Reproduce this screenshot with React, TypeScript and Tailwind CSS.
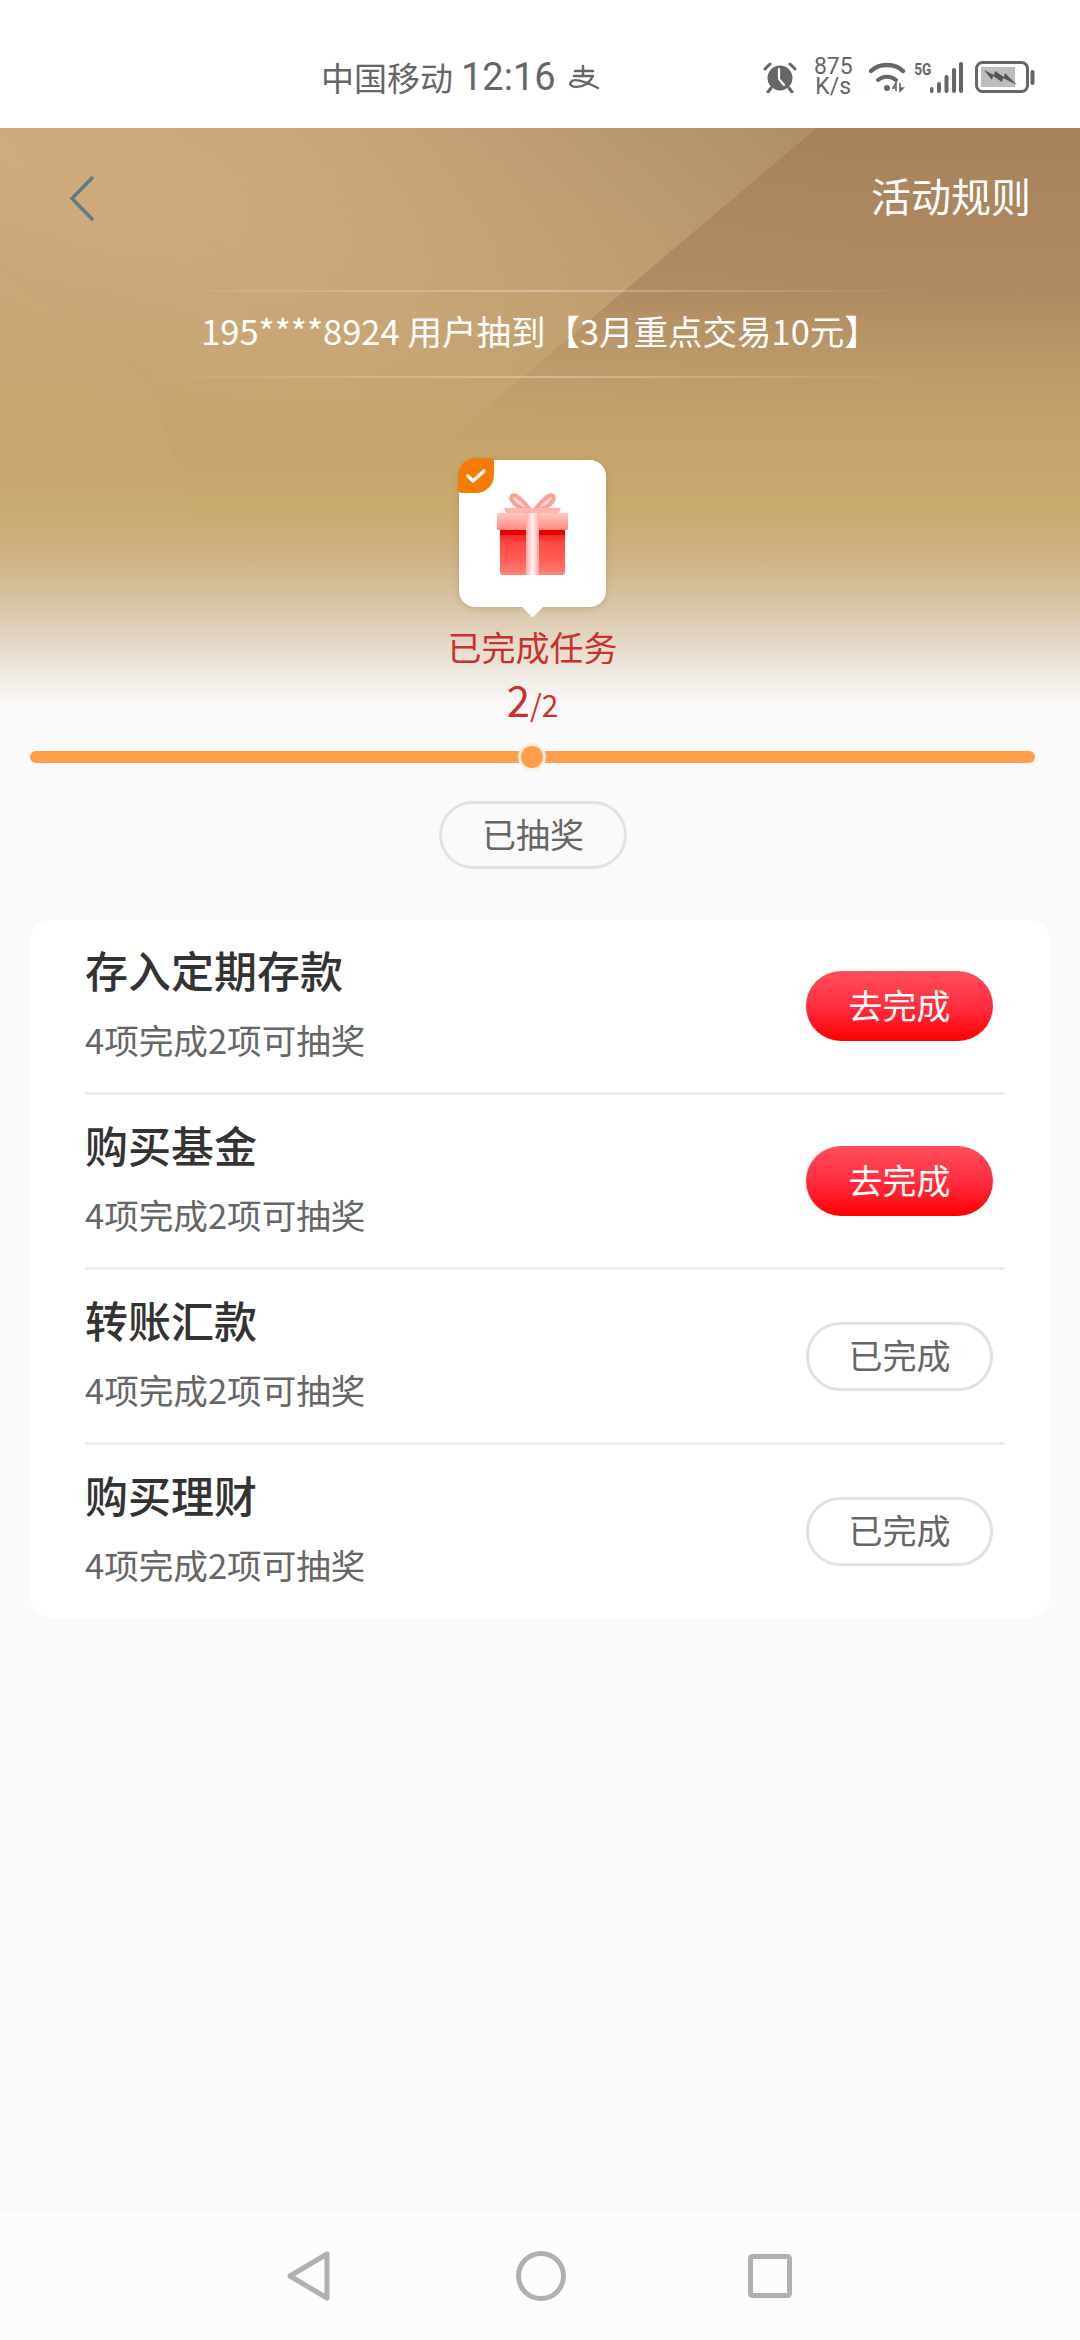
const cjk = { fontFamily: '"Noto Sans CJK SC", "Noto Sans", sans-serif' };

const tasks = [
  { name: "存入定期存款", done: false },
  { name: "购买基金", done: false },
  { name: "转账汇款", done: true },
  { name: "购买理财", done: true },
];

function AlipayIcon() {
  return (
    <svg width="33" height="26" viewBox="0 0 33 26" fill="none">
      <path d="M7 7H25M15 2V12M6 12H25C22 18 16 23 8 23 3 23 1 20 3 18 6 14 16 17 30 24" stroke="#666" strokeWidth="2.4" strokeLinecap="round" strokeLinejoin="round" />
    </svg>
  );
}

function AlarmIcon() {
  return (
    <svg width="34" height="32" viewBox="0 0 34 32" fill="none">
      <circle cx="17" cy="17" r="12.5" fill="#666" />
      <path d="M16 8v10l5 6" stroke="#fff" strokeWidth="2.2" strokeLinecap="round" strokeLinejoin="round" />
      <path d="M2 8 7 3M32 8 27 3" stroke="#666" strokeWidth="3" strokeLinecap="round" />
      <path d="M8 27 5 31M26 27l3 4" stroke="#666" strokeWidth="3" strokeLinecap="round" />
    </svg>
  );
}

function WifiIcon() {
  return (
    <svg width="38" height="32" viewBox="0 0 38 32" fill="none">
      <path d="M2 10C10 2 26 2 34 10" stroke="#666" strokeWidth="4.5" strokeLinecap="round" />
      <path d="M9 19c5-4.500 13-4.500 18 0" stroke="#666" strokeWidth="4" strokeLinecap="round" />
      <circle cx="18" cy="27" r="3" fill="#666" />
      <path d="M27 30v-8l-3 5h3M31 22v8l3-3h-3" stroke="#666" strokeWidth="1.6" />
    </svg>
  );
}

function SignalIcon() {
  return (
    <svg width="33" height="31" viewBox="0 0 33 31" fill="#666">
      <rect x="0" y="25" width="3.500" height="6" rx="1.700" />
      <rect x="7" y="20" width="4" height="11" rx="2" />
      <rect x="14.500" y="13" width="4" height="18" rx="2" />
      <rect x="22" y="6" width="4" height="25" rx="2" />
      <rect x="29" y="0" width="4" height="31" rx="2" />
    </svg>
  );
}

function BatteryIcon() {
  return (
    <svg width="60" height="32" viewBox="0 0 60 32" fill="none">
      <rect x="1.500" y="1.500" width="51" height="29" rx="6" stroke="#666" strokeWidth="3" />
      <rect x="6" y="6" width="34" height="20" fill="#bdbdbd" />
      <rect x="55.500" y="9" width="4" height="15" rx="2" fill="#666" />
      <path d="M9 9l10 5 1-4 9 6 1-4 12 12-14-7-1 4-9-6-1 4Z" fill="#555" />
    </svg>
  );
}

function GiftIcon() {
  return (
    <svg width="71" height="82" viewBox="0 0 71 82" fill="none">
      <defs>
        <linearGradient id="giftLid" x1="0" y1="0" x2="0" y2="1">
          <stop offset="0" stopColor="#ffc8c0" />
          <stop offset="1" stopColor="#ff8a82" />
        </linearGradient>
        <linearGradient id="giftBody" x1="0" y1="0" x2="0" y2="1">
          <stop offset="0" stopColor="#f01010" />
          <stop offset="0.3" stopColor="#ff4a44" />
          <stop offset="0.7" stopColor="#ff6058" />
          <stop offset="1" stopColor="#ff857c" />
        </linearGradient>
        <linearGradient id="giftRibbon" x1="0" y1="0" x2="1" y2="0">
          <stop offset="0" stopColor="#ffa9a2" />
          <stop offset="0.5" stopColor="#fff1ef" />
          <stop offset="1" stopColor="#ffa9a2" />
        </linearGradient>
      </defs>
      <path d="M34 18C26 7 18 0 15 3 12 7 20 16 34 18Z" fill="#ffdcd7" stroke="#ff9f96" strokeWidth="4" strokeLinejoin="round" />
      <path d="M37 18C45 7 53 0 56 3 59 7 51 16 37 18Z" fill="#ffdcd7" stroke="#ff9f96" strokeWidth="4" strokeLinejoin="round" />
      <path d="M7 15H64L62 20H9Z" fill="#ffb5ac" />
      <rect x="0" y="20" width="71" height="17" rx="1.500" fill="url(#giftLid)" />
      <rect x="3" y="37" width="65" height="45" rx="3" fill="url(#giftBody)" />
      <rect x="3" y="37" width="65" height="5" fill="#e60000" />
      <rect x="29" y="20" width="13" height="62" fill="url(#giftRibbon)" />
    </svg>
  );
}

function TaskRow({ name, done }: { name: string; done: boolean }) {
  return (
    <div className="flex h-[175px] items-center justify-between border-b-[3px] border-[#eeeeee] pr-[12px] last:border-transparent">
      <div className="flex flex-col pb-[10px]">
        <span className="text-[43px] font-medium leading-[60px] text-[#333333]">{name}</span>
        <span className="mt-[15px] text-[34.600px] leading-[50px] text-[#666666]">4项完成2项可抽奖</span>
      </div>
      {done ? (
        <button className="flex h-[69px] w-[187px] items-center justify-center rounded-full border-[3px] border-[#e2e2e2] pb-[4px] text-[34px] text-[#666666]">
          已完成
        </button>
      ) : (
        <button className="flex h-[70px] w-[187px] items-center justify-center rounded-full bg-[linear-gradient(180deg,#ff4f5c_0%,#ff2a3c_55%,#fe0000_100%)] pb-[3px] text-[34px] text-white">
          去完成
        </button>
      )}
    </div>
  );
}

export default function App() {
  return (
    <div className="flex h-[2340px] w-[1080px] flex-col overflow-hidden bg-[#fafafa]" style={cjk}>
      {/* status bar */}
      <div className="flex h-[128px] items-center bg-white pl-[321px] pr-[45px] pt-[26px] text-[#666666]">
        <span className="text-[33px] leading-none">中国移动</span>
        <span className="ml-[8px] text-[38px] leading-none" style={{ fontFamily: "Roboto, sans-serif" }}>12:16</span>
        <div className="ml-[12px]"><AlipayIcon /></div>
        <div className="ml-auto flex items-center">
          <AlarmIcon />
          <div className="ml-[17px] flex flex-col items-center text-[23px] leading-[20px]" style={{ fontFamily: "Roboto, sans-serif" }}>
            <span>875</span>
            <span>K/s</span>
          </div>
          <div className="ml-[16px]"><WifiIcon /></div>
          <span className="mb-[16px] ml-[5px] scale-x-[0.8] text-[17px] font-bold leading-none" style={{ fontFamily: "Roboto, sans-serif" }}>5G</span>
          <div className="-ml-[3px]"><SignalIcon /></div>
          <div className="ml-[12px]"><BatteryIcon /></div>
        </div>
      </div>

      {/* hero */}
      <div className="relative h-[592px] bg-[linear-gradient(180deg,#cba87b_0%,#c4a272_30%,#c5a56c_55%,#c9aa6f_65%,#cfb386_73%,#d8c4a4_80%,#e3d5c3_86%,#efe9e1_92%,#f9f8f6_97%,#fafafa_100%)]">
        <svg className="absolute inset-0" width="1080" height="592" viewBox="0 0 1080 592">
          <defs>
            <linearGradient id="facet" x1="0" y1="0" x2="0" y2="1">
              <stop offset="0" stopColor="#a07a54" stopOpacity="0.85" />
              <stop offset="0.4" stopColor="#a27c56" stopOpacity="0.6" />
              <stop offset="0.75" stopColor="#b8935f" stopOpacity="0" />
            </linearGradient>
            <linearGradient id="shade" x1="1" y1="0" x2="0.35" y2="0.55">
              <stop offset="0" stopColor="#a58460" stopOpacity="0.75" />
              <stop offset="1" stopColor="#c0a070" stopOpacity="0" />
            </linearGradient>
            <radialGradient id="glow" cx="0.3" cy="0" r="0.55">
              <stop offset="0" stopColor="#d6b184" stopOpacity="0.8" />
              <stop offset="1" stopColor="#d6b184" stopOpacity="0" />
            </radialGradient>
          </defs>
          <rect width="1080" height="592" fill="url(#glow)" />
          <path d="M816 0 300 440 0 0Z" fill="url(#shade)" />
          <path d="M816 0H1080V430H310Z" fill="url(#facet)" />
          <path d="M0 142 150 259 200 400H0Z" fill="#d4b384" opacity="0.12" />
        </svg>

        <div className="relative flex flex-col">
          <div className="mt-[37px] flex h-[60px] items-center justify-between pl-[69px] pr-[49px]">
            <svg className="mt-[6px]" width="26" height="47" viewBox="0 0 26 47" fill="none">
              <path d="M24 2 3 23.500 24 45" stroke="#5f7b85" strokeWidth="3.500" />
            </svg>
            <span className="text-[40px] leading-none text-white">活动规则</span>
          </div>

          <div className="mt-[65px] flex h-[88px] flex-col items-center justify-between">
            <div className="h-[2px] w-[780px] bg-[linear-gradient(90deg,transparent,rgba(255,255,255,0.3),transparent)]" />
            <span className="mb-[8px] text-[34.500px] leading-none text-white">195****8924 用户抽到【3月重点交易10元】</span>
            <div className="h-[2px] w-[780px] bg-[linear-gradient(90deg,transparent,rgba(255,255,255,0.3),transparent)]" />
          </div>

          <div className="mt-[82px] flex flex-col items-center pr-[15px]">
            <div className="relative flex h-[147px] w-[147px] items-center justify-center rounded-[16px] bg-white shadow-[0_2px_6px_rgba(120,90,50,0.25)]">
              <div className="absolute -left-[1px] -top-[2px] flex h-[35px] w-[36px] items-center justify-center rounded-bl-[4px] rounded-br-[18px] rounded-tl-[18px] rounded-tr-[4px] bg-[#f57c00]">
                <svg width="24" height="18" viewBox="0 0 24 18" fill="none">
                  <path d="M4 9l5 5L20 4" stroke="#fff" strokeWidth="3.500" strokeLinecap="round" strokeLinejoin="round" />
                </svg>
              </div>
              <div className="absolute -bottom-[7px] left-[65px] h-[17px] w-[17px] rotate-45 bg-white" />
              <GiftIcon />
            </div>
            <span className="mt-[20px] text-[34px] leading-[40px] text-[#c8322e]">已完成任务</span>
            <div className="mt-[7px] flex items-baseline leading-[50px] text-[#c8322e]">
              <span className="text-[42px]">2</span>
              <span className="text-[30px]">/2</span>
            </div>
          </div>
        </div>
      </div>

      {/* progress */}
      <div className="relative ml-[30px] mt-[31px] h-[12px] w-[1005px] rounded-full bg-[#ff9d4a]">
        <div className="absolute left-[491px] top-[-5px] h-[22px] w-[22px] rounded-full bg-[#ff9d4a] ring-[3px] ring-[#fbeee2]" />
      </div>

      <div className="ml-[439px] mt-[38px] flex h-[68px] w-[188px] items-center justify-center rounded-full border-[3px] border-[#e2e2e2] pb-[4px] text-[34px] text-[#666666]">
        已抽奖
      </div>

      {/* task card */}
      <div className="ml-[29px] mt-[51px] h-[698px] w-[1022px] rounded-[24px] bg-white pl-[56px] pr-[46px]">
        {tasks.map((t) => (
          <TaskRow key={t.name} name={t.name} done={t.done} />
        ))}
      </div>

      {/* nav bar */}
      <div className="mt-auto flex h-[128px] items-center bg-[#fcfcfc] pl-[286px]">
        <svg width="46" height="52" viewBox="0 0 46 52" fill="none">
          <path d="M41 4 4 26l37 22Z" stroke="#b0b0b0" strokeWidth="5" strokeLinejoin="round" />
        </svg>
        <svg className="ml-[184px]" width="50" height="50" viewBox="0 0 50 50" fill="none">
          <circle cx="25" cy="25" r="22.500" stroke="#b0b0b0" strokeWidth="5" />
        </svg>
        <svg className="ml-[182px]" width="44" height="44" viewBox="0 0 44 44" fill="none">
          <rect x="2.500" y="2.500" width="39" height="39" rx="2" stroke="#b0b0b0" strokeWidth="5" />
        </svg>
      </div>
    </div>
  );
}
